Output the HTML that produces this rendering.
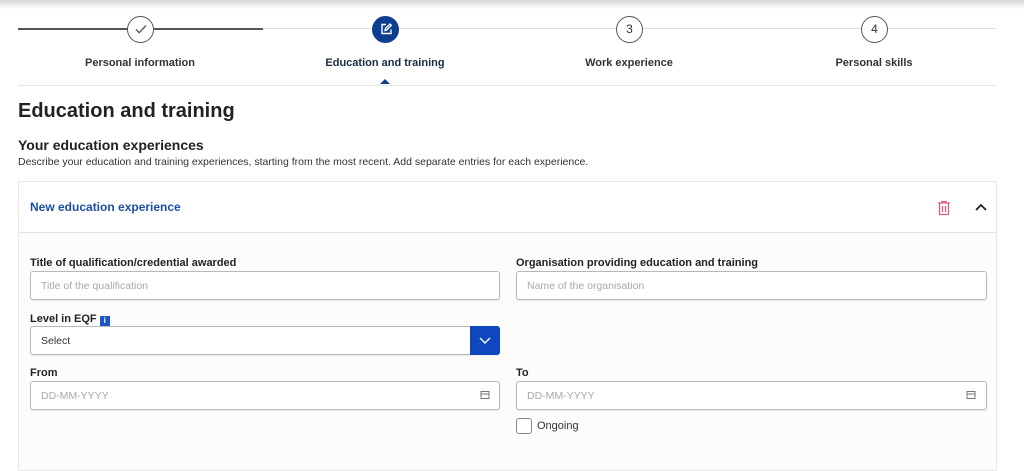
<!DOCTYPE html>
<html><head><style>
*{box-sizing:border-box;margin:0;padding:0}
body{width:1024px;height:454px;overflow:hidden;background:#fff;font-family:"Liberation Sans",sans-serif;color:#222;position:relative}
.a{position:absolute}
.lbl{font-size:11px;font-weight:bold;color:#222}
.inp{position:absolute;height:29px;border:1px solid #b8b8b8;border-radius:3px;background:#fff;font-size:10.5px;color:#a8a8a8;padding:8px 10px;box-shadow:0 1px 1px rgba(0,0,0,.08)}
.step{position:absolute;width:27px;height:27px;border-radius:50%;background:#fff;border:1.5px solid #555;font-size:12px;text-align:center;line-height:24px;color:#333}
.sl{position:absolute;font-size:11px;font-weight:bold;color:#333;text-align:center;width:200px}
</style></head><body>
<div class="a" style="left:0;top:0;width:1024px;height:9px;background:linear-gradient(#d8d8d8,#fff)"></div>
<div class="a" style="left:18px;top:28px;width:245px;height:2px;background:#555"></div>
<div class="a" style="left:263px;top:28px;width:733px;height:1px;background:#ddd"></div>
<div class="step" style="left:127px;top:16px"><svg width="14" height="14" viewBox="0 0 14 14" style="margin-top:5px"><path d="M2 7.5l3.2 3.2L12 3.5" fill="none" stroke="#555" stroke-width="1.3"/></svg></div>
<div class="step" style="left:372px;top:16px;background:#0d3f8f;border-color:#0d3f8f"><svg width="14" height="14" viewBox="0 0 14 14" style="margin-top:5px"><path d="M7 2.5H3v9h9V7.5" fill="none" stroke="#fff" stroke-width="1.4"/><path d="M6 8.5l.4-2L11 2l1.3 1.3L7.8 8z" fill="none" stroke="#fff" stroke-width="1.3"/></svg></div>
<div class="step" style="left:616px;top:16px">3</div>
<div class="step" style="left:861px;top:16px">4</div>
<div class="sl" style="left:40px;top:57px">Personal information</div>
<div class="sl" style="left:285px;top:57px;color:#1b2b44">Education and training</div>
<div class="sl" style="left:529px;top:57px">Work experience</div>
<div class="sl" style="left:774px;top:57px">Personal skills</div>
<div class="a" style="left:380px;top:79px;width:0;height:0;border-left:5px solid transparent;border-right:5px solid transparent;border-bottom:5px solid #0d3f8f"></div>
<div class="a" style="left:18px;top:85px;width:978px;height:1px;background:#e4e4e4"></div>
<div class="a" style="left:18px;top:100px;font-size:20px;font-weight:bold;color:#222">Education and training</div>
<div class="a" style="left:18px;top:137px;font-size:14px;font-weight:bold;color:#222">Your education experiences</div>
<div class="a" style="left:18px;top:156px;font-size:10.5px;color:#333">Describe your education and training experiences, starting from the most recent. Add separate entries for each experience.</div>
<div class="a" style="left:18px;top:181px;width:979px;height:290px;border:1px solid #e8e8e8;background:#fdfcfd"></div>
<div class="a" style="left:19px;top:182px;width:977px;height:51px;background:#fff;border-bottom:1px solid #e2e2e2"></div>
<div class="a" style="left:30px;top:200px;font-size:12px;font-weight:bold;color:#1d4fa5">New education experience</div>
<svg class="a" style="left:937px;top:200px" width="14" height="16" viewBox="0 0 14 16"><path d="M1 3h12M5 3V1.5h4V3M2.5 3.5v11h9v-11M5.5 6v6M8.5 6v6" fill="none" stroke="#d7607a" stroke-width="1.3"/></svg>
<svg class="a" style="left:975px;top:203px" width="12" height="8" viewBox="0 0 12 8"><path d="M1 7l5-5 5 5" fill="none" stroke="#222" stroke-width="1.8"/></svg>
<div class="a lbl" style="left:30px;top:257px">Title of qualification/credential awarded</div>
<div class="inp" style="left:30px;top:271px;width:470px">Title of the qualification</div>
<div class="a lbl" style="left:516px;top:257px">Organisation providing education and training</div>
<div class="inp" style="left:516px;top:271px;width:471px">Name of the organisation</div>
<div class="a lbl" style="left:30px;top:313px">Level in EQF <span style="display:inline-block;width:10px;height:10px;background:#1b55c4;color:#fff;font-size:8px;text-align:center;line-height:10px;vertical-align:-1px">i</span></div>
<div class="inp" style="left:30px;top:326px;width:470px;color:#333">Select</div>
<div class="a" style="left:470px;top:326px;width:30px;height:29px;background:#0f47bf;border-radius:0 3px 3px 0"><svg width="30" height="29" viewBox="0 0 30 29"><path d="M10 12l5 5 5-5" fill="none" stroke="#fff" stroke-width="1.4"/></svg></div>
<div class="a lbl" style="left:30px;top:367px">From</div>
<div class="inp" style="left:30px;top:381px;width:470px">DD-MM-YYYY</div>
<div class="a lbl" style="left:516px;top:367px">To</div>
<div class="inp" style="left:516px;top:381px;width:471px">DD-MM-YYYY</div>
<svg class="a" style="left:480px;top:390px" width="10" height="10" viewBox="0 0 10 10"><rect x="1" y="1.5" width="8" height="7" fill="none" stroke="#777"/><path d="M1 4h8" stroke="#777"/></svg>
<svg class="a" style="left:966px;top:390px" width="10" height="10" viewBox="0 0 10 10"><rect x="1" y="1.5" width="8" height="7" fill="none" stroke="#777"/><path d="M1 4h8" stroke="#777"/></svg>
<div class="a" style="left:516px;top:418px;width:16px;height:16px;border:1px solid #888;border-radius:3px;background:#fff"></div>
<div class="a" style="left:537px;top:420px;font-size:11px;color:#333">Ongoing</div>
</body></html>
